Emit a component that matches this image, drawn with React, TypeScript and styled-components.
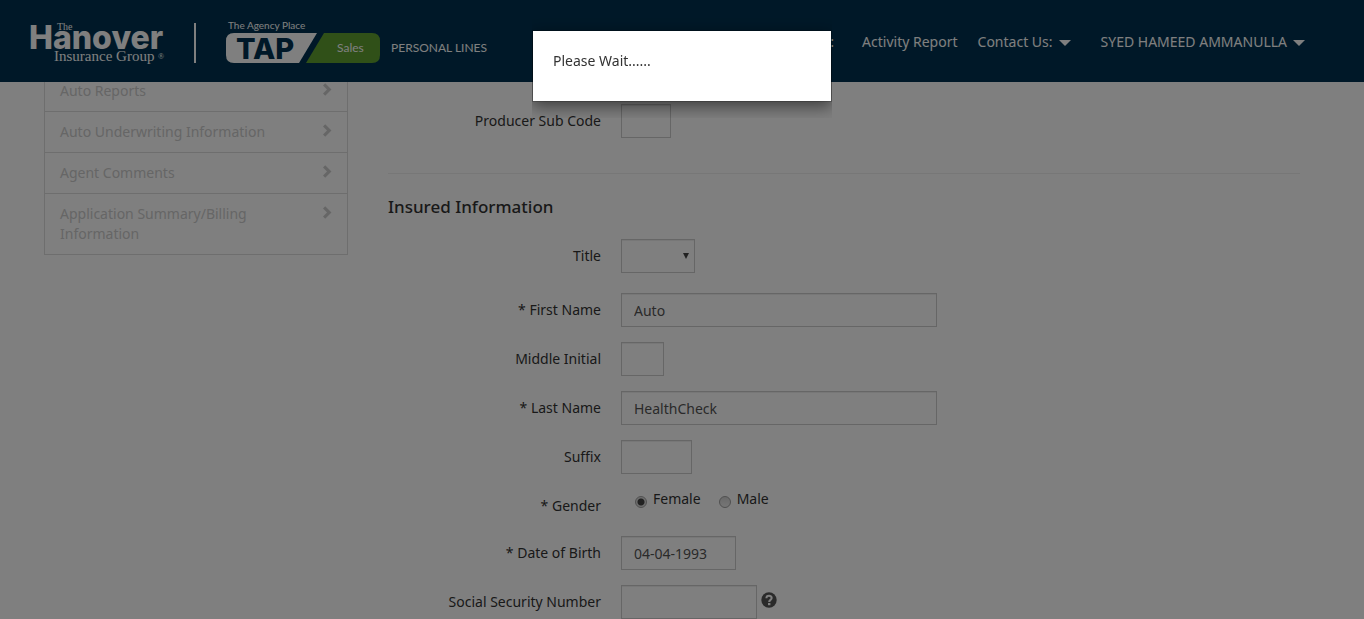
import React from "react";
import styled, { createGlobalStyle } from "styled-components";

const GlobalStyle = createGlobalStyle`
  *, *::before, *::after { box-sizing: border-box; }
  html, body { margin: 0; overflow: hidden; }
  body {
    background: #fff;
    color: #333;
    font-family: "Noto Sans", "Open Sans", sans-serif;
    font-size: 14px;
    font-weight: 400;
    line-height: 20px;
  }
`;

const Header = styled.header`
  position: fixed;
  inset: 0 0 auto 0;
  z-index: 10;
  height: 82px;
  display: flex;
  justify-content: space-between;
  align-items: flex-start;
  padding: 20px 59px 0 30px;
  background: #003150;
  color: #fff;
`;

const TopNav = styled.nav`
  display: flex;
  align-items: center;
  padding-top: 12px;
`;

const TopLink = styled.a<{ $gap?: number }>`
  display: flex;
  align-items: center;
  gap: 6px;
  margin-left: ${(p) => p.$gap ?? 20}px;
  color: #fff;
  text-decoration: none;
  white-space: nowrap;
`;

const Caret = styled.span`
  margin-top: 2px;
  border: 6px solid transparent;
  border-top-color: #fff;
  border-bottom: 0;
`;

const Page = styled.div`
  display: grid;
  grid-template-columns: 304px minmax(0, 1fr);
  column-gap: 40px;
  align-items: start;
  padding: 70px 64px 0 44px;
`;

const SideNav = styled.nav`
  display: flex;
  flex-direction: column;
  border: 1px solid #ddd;
`;

const SideLink = styled.a`
  display: flex;
  justify-content: space-between;
  align-items: flex-start;
  padding: 10px 15px;
  color: #ccc;
  text-decoration: none;

  & + & { border-top: 1px solid #ddd; }
  span { max-width: 220px; }
  svg { flex: none; margin: 2px 0 0; }
`;

const Form = styled.form`
  padding-top: 34px;
`;

const Divider = styled.hr`
  height: 1px;
  margin: 35px 0 21px;
  border: 0;
  background: #eee;
`;

const Heading = styled.h2`
  margin: 0 0 20px;
  color: #333;
  font-size: 17px;
  font-weight: 500;
  line-height: 24px;
`;

const Row = styled.div<{ $space?: number }>`
  display: grid;
  grid-template-columns: 213px minmax(0, 1fr);
  column-gap: 20px;
  margin-bottom: ${(p) => p.$space ?? 15}px;
`;

const Label = styled.label`
  padding-top: 7px;
  text-align: right;
`;

const Control = styled.div`
  display: flex;
  align-items: center;
  gap: 4px;
`;

const Input = styled.input<{ $width: number }>`
  width: ${(p) => p.$width}px;
  height: 34px;
  padding: 6px 12px;
  border: 1px solid #ccc;
  border-radius: 0;
  background: #fff;
  box-shadow: inset 0 1px 1px rgba(0, 0, 0, 0.075);
  color: #555;
  font: inherit;
`;

const SelectBox = styled.div`
  position: relative;
  height: 34px;

  svg {
    position: absolute;
    top: 14px;
    right: 6px;
    pointer-events: none;
  }
`;

const Select = styled.select`
  appearance: none;
  width: 74px;
  height: 34px;
  border: 1px solid #ccc;
  border-radius: 0;
  background: #fff;
  box-shadow: inset 0 1px 1px rgba(0, 0, 0, 0.075);
  font: inherit;
`;

const GenderGroup = styled.div`
  display: flex;
  gap: 18px;
  height: 32px;
  padding-left: 14px;
`;

const RadioLabel = styled.label`
  display: flex;
  align-items: flex-start;
  gap: 6px;
`;

const Radio = styled.input`
  appearance: none;
  width: 12px;
  height: 12px;
  margin: 7px 0 0;
  border: 1px solid #a0a0a0;
  border-radius: 50%;
  background: linear-gradient(#d4d4d4, #ececec);

  &:checked {
    background: radial-gradient(circle, #444 0 3px, #dcdcdc 4px);
  }
`;

const HelpButton = styled.button`
  display: flex;
  padding: 0;
  border: 0;
  margin-bottom: 4px;
  background: none;
`;

const Backdrop = styled.div`
  position: fixed;
  inset: 0;
  z-index: 20;
  background: rgba(0, 0, 0, 0.5);
`;

const DialogFrame = styled.div`
  width: 300px;
  margin: 0 auto;
  padding: 30px 0 16px;
  overflow: hidden;
`;

const Dialog = styled.div`
  padding: 20px;
  border: 1px solid rgba(0, 0, 0, 0.2);
  background: #fff;
  background-clip: padding-box;
  box-shadow: 0 5px 15px rgba(0, 0, 0, 0.5);

  p { margin: 0 0 10px; }
`;

const Logo = () => (
  <svg width="470" height="48" viewBox="30 20 470 48" role="img" aria-label="The Hanover Insurance Group, TAP Sales">
    <g fill="#fff">
      <text x="57" y="30" fontFamily="Liberation Serif" fontSize="10">The</text>
      <text x="29" y="49" fontFamily="Inter" fontWeight="800" fontSize="32">Hanover</text>
      <text x="54" y="61" fontFamily="Liberation Serif" fontSize="15">Insurance Group</text>
      <text x="158" y="59" fontFamily="Liberation Serif" fontSize="8">®</text>
      <rect x="194" y="23" width="2" height="40" />
      <text x="228" y="29" fontFamily="Lato" fontSize="10">The Agency Place</text>
      <path d="M234 33H317L299 63H234Q226 63 226 55V41Q226 33 234 33Z" />
      <text x="391" y="52" fontFamily="Lato" fontSize="12">PERSONAL LINES</text>
    </g>
    <path fill="#60a030" d="M324 33H372Q380 33 380 41V55Q380 63 372 63H306Z" />
    <text x="236" y="59" fill="#003150" fontFamily="Inter" fontWeight="800" fontSize="29">TAP</text>
    <text x="337" y="52" fill="#fff" fontFamily="Lato" fontSize="12">Sales</text>
  </svg>
);

const Chevron = () => (
  <svg width="10" height="13" viewBox="0 0 10 13" aria-hidden="true">
    <path d="M1 2.5L3.2 .3L9.5 6.5L3.2 12.7L1 10.5L5 6.5Z" fill="#ccc" />
  </svg>
);

const sections = [
  "Auto Reports",
  "Auto Underwriting Information",
  "Agent Comments",
  "Application Summary/Billing Information",
];

type FieldProps = { id: string; label: string; width: number; value?: string; space?: number; children?: React.ReactNode };

const Field = ({ id, label, width, value = "", space, children }: FieldProps) => (
  <Row $space={space}>
    <Label htmlFor={id}>{label}</Label>
    <Control>
      <Input id={id} $width={width} defaultValue={value} />
      {children}
    </Control>
  </Row>
);

export default function App() {
  return (
    <>
      <GlobalStyle />
      <Header>
        <Logo />
        <TopNav>
          <span>:</span>
          <TopLink href="#activity" $gap={28}>Activity Report</TopLink>
          <TopLink href="#contact">Contact Us: <Caret /></TopLink>
          <TopLink href="#account" $gap={30}>SYED HAMEED AMMANULLA <Caret /></TopLink>
        </TopNav>
      </Header>
      <Page>
        <SideNav>
          {sections.map((s) => (
            <SideLink href="#section" key={s}><span>{s}</span><Chevron /></SideLink>
          ))}
        </SideNav>
        <Form>
          <Field id="subcode" label="Producer Sub Code" width={50} space={0} />
          <Divider />
          <Heading>Insured Information</Heading>
          <Row $space={20}>
            <Label htmlFor="title">Title</Label>
            <Control>
              <SelectBox>
                <Select id="title"><option></option></Select>
                <svg width="6" height="6" viewBox="0 0 6 6" aria-hidden="true"><path d="M0 0H6L3 6Z" fill="#444" /></svg>
              </SelectBox>
            </Control>
          </Row>
          <Field id="first" label="* First Name" width={316} value="Auto" />
          <Field id="middle" label="Middle Initial" width={43} />
          <Field id="last" label="* Last Name" width={316} value="HealthCheck" />
          <Field id="suffix" label="Suffix" width={71} />
          <Row role="radiogroup" aria-labelledby="gender">
            <Label as="span" id="gender">* Gender</Label>
            <GenderGroup>
              <RadioLabel><Radio type="radio" name="gender" defaultChecked />Female</RadioLabel>
              <RadioLabel><Radio type="radio" name="gender" />Male</RadioLabel>
            </GenderGroup>
          </Row>
          <Field id="dob" label="* Date of Birth" width={115} value="04-04-1993" />
          <Field id="ssn" label="Social Security Number" width={136}>
            <HelpButton type="button" aria-label="Help">
              <svg width="16" height="16" viewBox="0 0 16 16">
                <circle cx="8" cy="8" r="7.7" fill="#555" />
                <path d="M5.4 6.2C5.4 3 10.7 3 10.7 6.1C10.7 8 8.2 7.8 8.2 10" fill="none" stroke="#fff" strokeWidth="2" />
                <path d="M7 11H9.4V13.2H7Z" fill="#fff" />
              </svg>
            </HelpButton>
          </Field>
        </Form>
      </Page>
      <Backdrop>
        <DialogFrame>
          <Dialog role="dialog" aria-modal="true" aria-label="Please wait">
            <p>Please Wait......</p>
          </Dialog>
        </DialogFrame>
      </Backdrop>
    </>
  );
}
